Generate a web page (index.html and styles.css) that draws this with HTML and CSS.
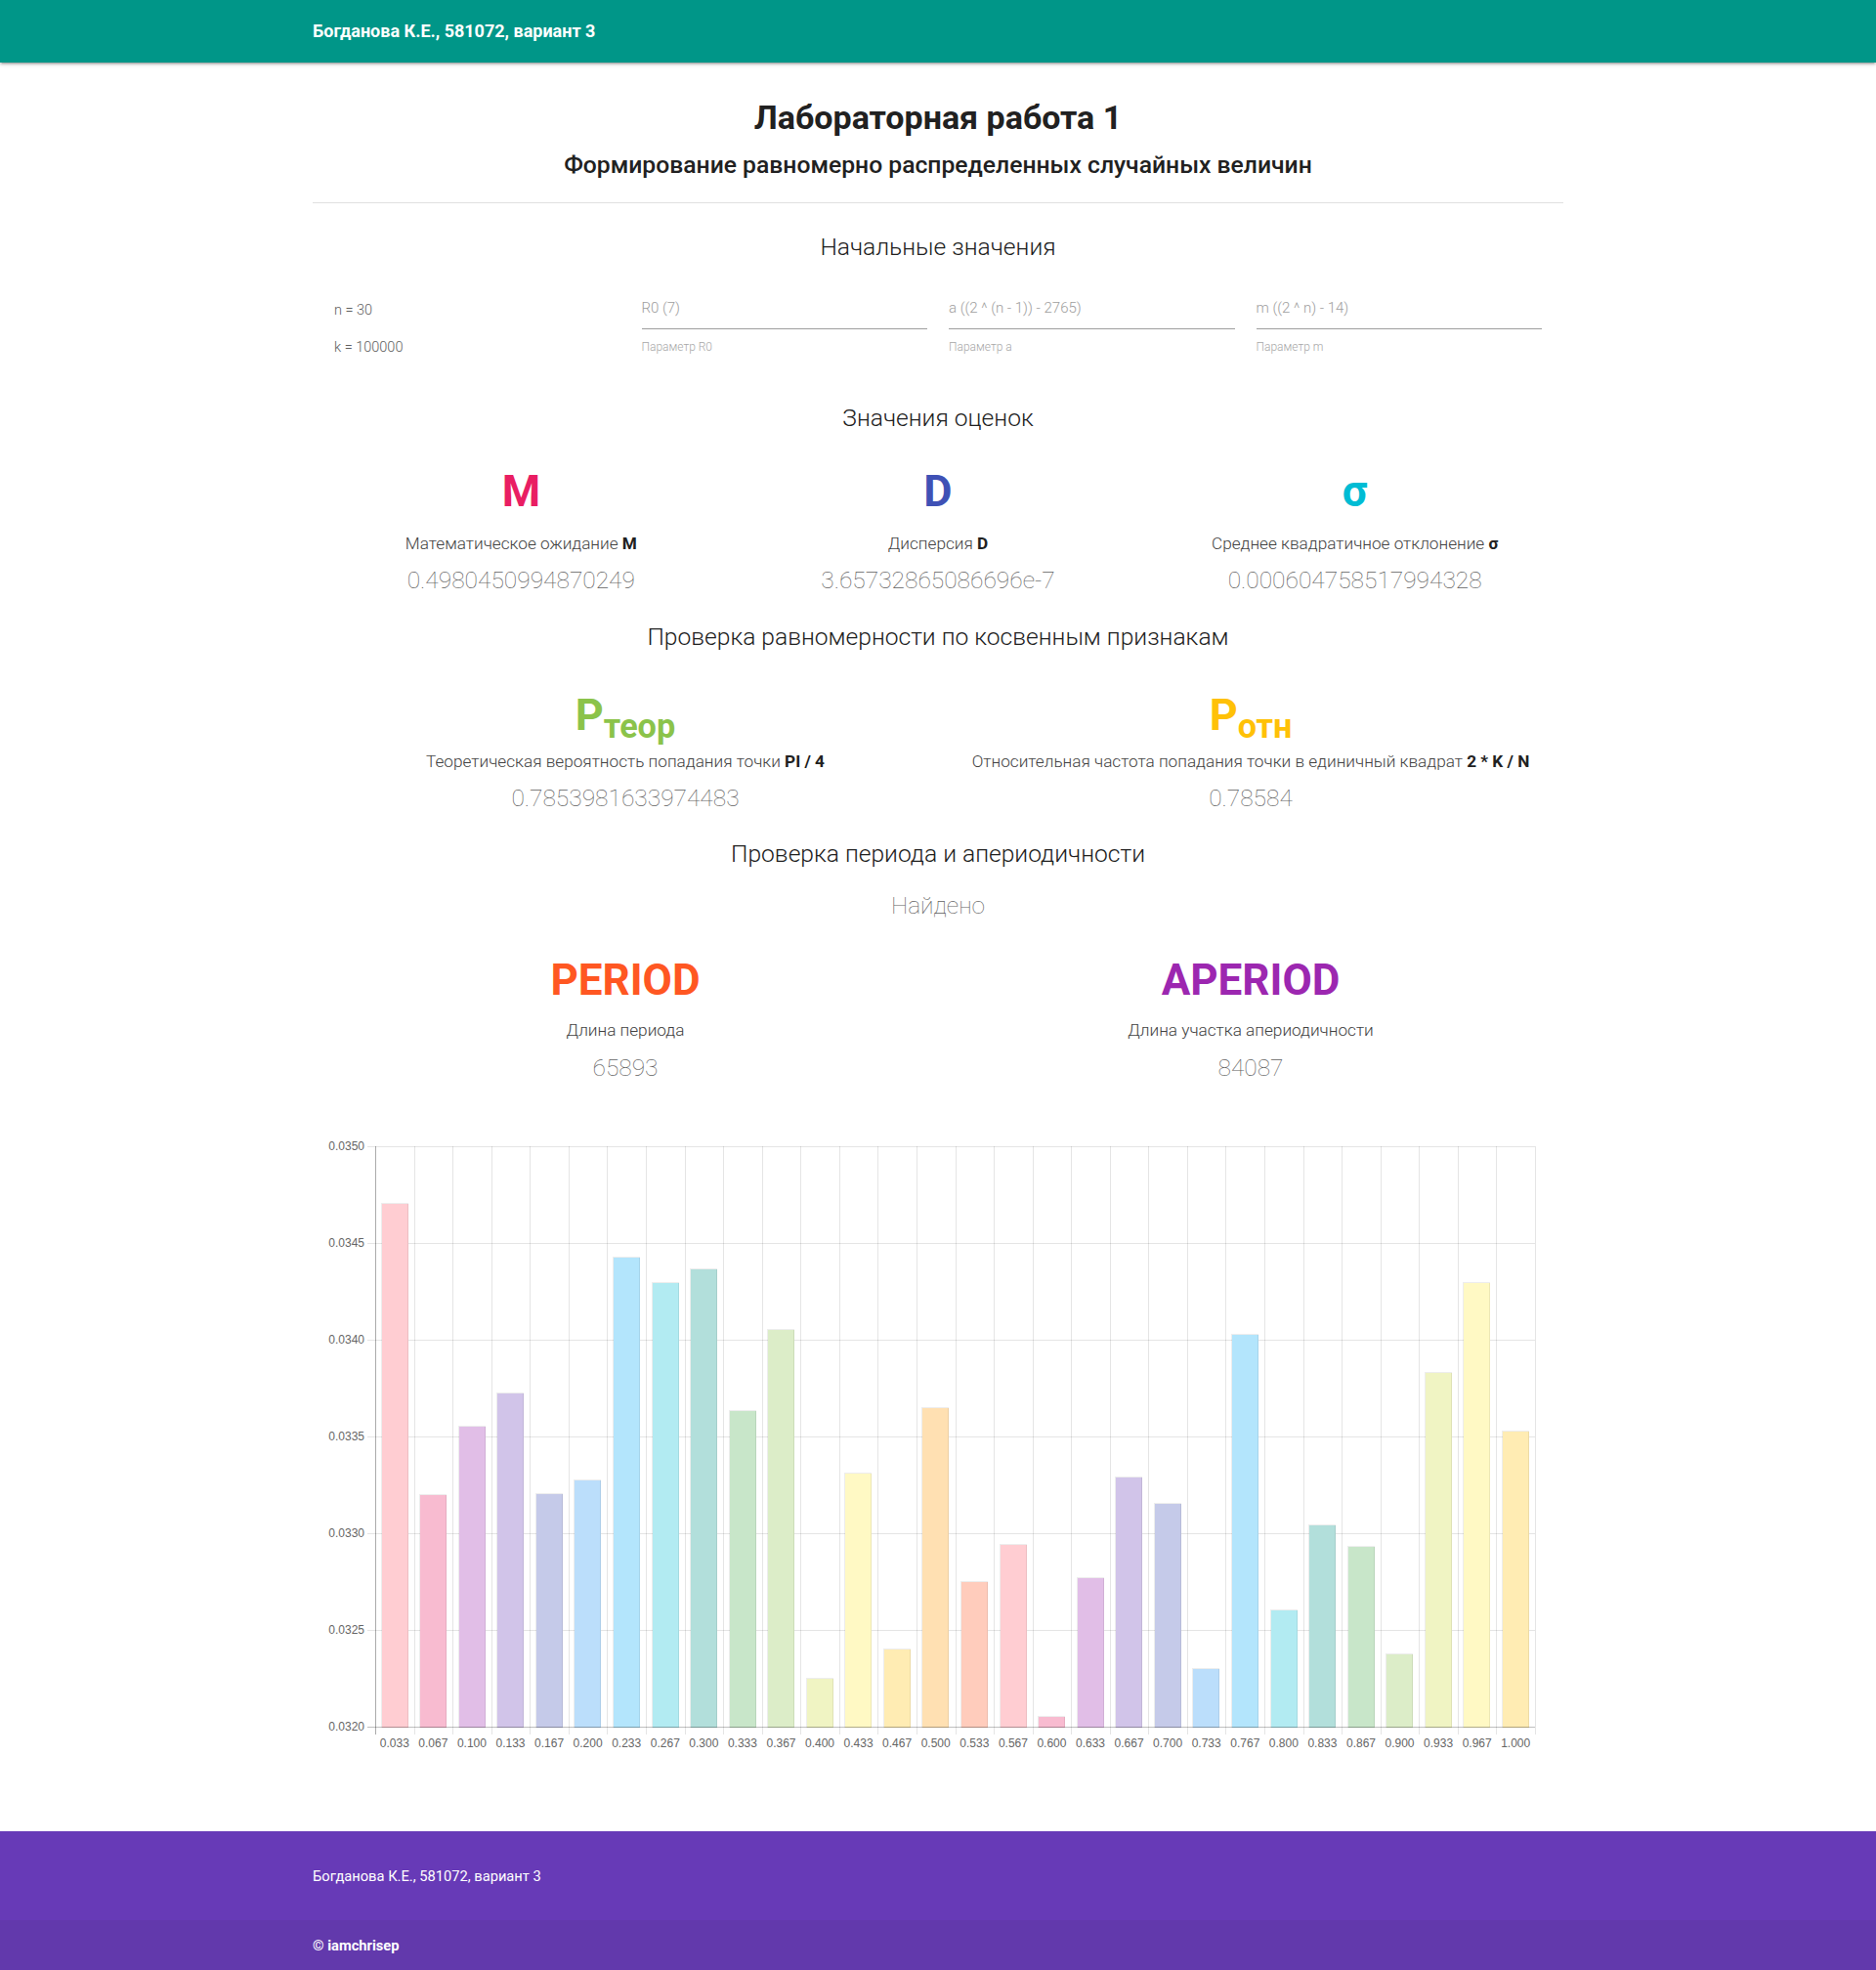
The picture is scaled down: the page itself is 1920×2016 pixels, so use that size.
FILE: index.html
```html
<!DOCTYPE html>
<html lang="ru">
<head>
<meta charset="utf-8">
<title>Лабораторная работа 1</title>
<link rel="stylesheet" href="styles.css">
</head>
<body>
<header class="nav">
  <div class="container nav-inner">Богданова К.Е., 581072, вариант 3</div>
</header>

<main class="container">
  <h1 class="title">Лабораторная работа 1</h1>
  <h2 class="subtitle">Формирование равномерно распределенных случайных величин</h2>
  <div class="divider"></div>

  <h3 class="section section-first">Начальные значения</h3>
  <div class="inputs">
    <div class="consts">
      <div class="const">n = 30</div>
      <div class="const">k = 100000</div>
    </div>
    <div class="field">
      <div class="field-input">R0 (7)</div>
      <div class="field-help">Параметр R0</div>
    </div>
    <div class="field">
      <div class="field-input">a ((2 ^ (n - 1)) - 2765)</div>
      <div class="field-help">Параметр a</div>
    </div>
    <div class="field">
      <div class="field-input">m ((2 ^ n) - 14)</div>
      <div class="field-help">Параметр m</div>
    </div>
  </div>

  <h3 class="section section-est">Значения оценок</h3>
  <div class="stats stats-3">
    <div class="stat">
      <div class="big pink">M</div>
      <div class="label">Математическое ожидание <b>M</b></div>
      <div class="value">0.4980450994870249</div>
    </div>
    <div class="stat">
      <div class="big indigo">D</div>
      <div class="label">Дисперсия <b>D</b></div>
      <div class="value">3.65732865086696e-7</div>
    </div>
    <div class="stat">
      <div class="big cyan">σ</div>
      <div class="label">Среднее квадратичное отклонение <b>σ</b></div>
      <div class="value">0.000604758517994328</div>
    </div>
  </div>

  <h3 class="section section-uni">Проверка равномерности по косвенным признакам</h3>
  <div class="stats stats-2 stats-p">
    <div class="stat">
      <div class="big lgreen">P<span class="sub">теор</span></div>
      <div class="label label-p">Теоретическая вероятность попадания точки <b>PI / 4</b></div>
      <div class="value value-p">0.7853981633974483</div>
    </div>
    <div class="stat">
      <div class="big amber">P<span class="sub">отн</span></div>
      <div class="label label-p">Относительная частота попадания точки в единичный квадрат <b>2 * K / N</b></div>
      <div class="value value-p">0.78584</div>
    </div>
  </div>

  <h3 class="section section-per">Проверка периода и апериодичности</h3>
  <div class="found">Найдено</div>
  <div class="stats stats-2 stats-per">
    <div class="stat">
      <div class="big big-word dorange">PERIOD</div>
      <div class="label label-per">Длина периода</div>
      <div class="value value-per">65893</div>
    </div>
    <div class="stat">
      <div class="big big-word purple">APERIOD</div>
      <div class="label label-per">Длина участка апериодичности</div>
      <div class="value value-per">84087</div>
    </div>
  </div>

  <div class="chart">
    <svg width="1280" height="650" viewBox="0 0 1280 650" xmlns="http://www.w3.org/2000/svg">
      <g class="grid" stroke="rgba(0,0,0,0.1)" stroke-width="1" shape-rendering="crispEdges">
        <line x1="56" y1="23.5" x2="1251" y2="23.5"/>
        <line x1="56" y1="122.5" x2="1251" y2="122.5"/>
        <line x1="56" y1="221.5" x2="1251" y2="221.5"/>
        <line x1="56" y1="320.5" x2="1251" y2="320.5"/>
        <line x1="56" y1="419.5" x2="1251" y2="419.5"/>
        <line x1="56" y1="518.5" x2="1251" y2="518.5"/>
      </g>
      <g id="vgrid" stroke="rgba(0,0,0,0.1)" stroke-width="1" shape-rendering="crispEdges"></g>
      <g id="bars" shape-rendering="crispEdges"></g>
      <g stroke="rgba(0,0,0,0.25)" stroke-width="1" shape-rendering="crispEdges">
        <line x1="56" y1="617.5" x2="1251" y2="617.5"/>
        <line x1="64.5" y1="23" x2="64.5" y2="625"/>
      </g>
      <g class="ylabels" font-family="Liberation Sans, Arial, sans-serif" font-size="12" fill="#666" text-anchor="end">
        <text x="53" y="27">0.0350</text>
        <text x="53" y="126">0.0345</text>
        <text x="53" y="225">0.0340</text>
        <text x="53" y="324">0.0335</text>
        <text x="53" y="423">0.0330</text>
        <text x="53" y="522">0.0325</text>
        <text x="53" y="621">0.0320</text>
      </g>
      <g id="xlabels" font-family="Liberation Sans, Arial, sans-serif" font-size="12" fill="#666" text-anchor="middle"></g>
    </svg>
  </div>
</main>

<footer class="footer">
  <div class="container footer-text">Богданова К.Е., 581072, вариант 3</div>
  <div class="footer-copy">
    <div class="container"><b>© iamchrisep</b></div>
  </div>
</footer>

<script src="chart.js"></script>
</body>
</html>
```

FILE: chart.js
```js
(function () {
  var values = [0.034708, 0.033201, 0.033558, 0.033727, 0.033208, 0.033279, 0.034429, 0.034299, 0.034370, 0.033636,
                0.034058, 0.032253, 0.033312, 0.032403, 0.033649, 0.032753, 0.032942, 0.032058, 0.032773, 0.033292,
                0.033156, 0.032305, 0.034032, 0.032604, 0.033045, 0.032935, 0.032377, 0.033831, 0.034299, 0.033532];
  var colors = ['#ffcdd2', '#f8bbd0', '#e1bee7', '#d1c4e9', '#c5cae9', '#bbdefb', '#b3e5fc', '#b2ebf2',
                '#b2dfdb', '#c8e6c9', '#dcedc8', '#f0f4c3', '#fff9c4', '#ffecb3', '#ffe0b2', '#ffccbc'];
  var NS = 'http://www.w3.org/2000/svg';
  var x0 = 64, x1 = 1251, yTop = 23, yBot = 617;
  var n = values.length, cw = (x1 - x0) / n, bw = cw * 0.72;
  var vg = document.getElementById('vgrid');
  var bars = document.getElementById('bars');
  var xl = document.getElementById('xlabels');
  for (var i = 0; i <= n; i++) {
    var gx = Math.round(x0 + i * cw) + 0.5;
    var l = document.createElementNS(NS, 'line');
    l.setAttribute('x1', gx); l.setAttribute('x2', gx);
    l.setAttribute('y1', yTop); l.setAttribute('y2', 625);
    vg.appendChild(l);
  }
  for (var j = 0; j < n; j++) {
    var h = (values[j] - 0.032) / 0.003 * (yBot - yTop);
    var r = document.createElementNS(NS, 'rect');
    var bx = x0 + j * cw + (cw - bw) / 2;
    r.setAttribute('x', Math.round(bx) + 0.5);
    r.setAttribute('y', Math.round(yBot - h) + 0.5);
    r.setAttribute('width', Math.round(bw) - 1);
    r.setAttribute('height', Math.round(h));
    r.setAttribute('fill', colors[j % colors.length]);
    r.setAttribute('stroke', 'rgba(0,0,0,0.07)');
    bars.appendChild(r);
    var t = document.createElementNS(NS, 'text');
    t.setAttribute('x', (x0 + j * cw + cw / 2).toFixed(1));
    t.setAttribute('y', 638);
    t.textContent = ((j + 1) / 30).toFixed(3);
    xl.appendChild(t);
  }
})();
```

FILE: styles.css
```css
* { box-sizing: border-box; }

html, body {
  margin: 0;
  padding: 0;
}

body {
  font-family: Roboto, "Noto Sans", sans-serif;
  color: #212121;
  background: #fff;
}

.container {
  width: 1280px;
  margin: 0 auto;
}

/* header */
.nav {
  height: 64px;
  background: #009688;
  color: #fff;
  box-shadow: 0 2px 2px 0 rgba(0,0,0,0.14), 0 3px 1px -2px rgba(0,0,0,0.12), 0 1px 5px 0 rgba(0,0,0,0.2);
}
.nav-inner {
  font-size: 18px;
  font-weight: 700;
  line-height: 63px;
}

/* titles */
.title {
  margin: 36px 0 0;
  font-size: 34px;
  line-height: 40px;
  font-weight: 700;
  text-align: center;
}
.subtitle {
  margin: 14px 0 0;
  font-size: 24.7px;
  line-height: 30px;
  font-weight: 500;
  text-align: center;
}
.divider {
  margin-top: 23px;
  height: 1px;
  background: #e0e0e0;
}

.section {
  margin: 0;
  font-size: 24.6px;
  line-height: 32px;
  font-weight: 300;
  text-align: center;
  color: #212121;
}
.section-first { margin-top: 29px; }
.section-est { margin-top: 46px; }
.section-uni { margin-top: 26px; }
.section-per { margin-top: 25px; }

/* inputs */
.inputs {
  margin-top: 36px;
  padding: 0 22px;
  display: grid;
  grid-template-columns: repeat(4, 1fr);
  column-gap: 22px;
}
.consts {
  padding-top: 3px;
  display: flex;
  flex-direction: column;
  gap: 18px;
}
.const {
  font-size: 14.5px;
  line-height: 20px;
  font-weight: 300;
  color: #616161;
}
.field-input {
  font-size: 15px;
  line-height: 20px;
  font-weight: 300;
  color: #9e9e9e;
  padding-bottom: 11px;
  border-bottom: 1px solid #9e9e9e;
}
.field-help {
  margin-top: 11px;
  font-size: 12px;
  line-height: 14px;
  font-weight: 300;
  color: #a8a8a8;
}

/* stats */
.stats {
  display: grid;
  text-align: center;
}
.stats-3 {
  grid-template-columns: repeat(3, 1fr);
  margin-top: 32px;
}
.stats-2 { grid-template-columns: repeat(2, 1fr); }
.stats-p { margin-top: 37px; }
.stats-per { margin-top: 33px; }

.big {
  font-size: 45px;
  line-height: 54px;
  font-weight: 700;
}
.big-word { font-size: 44px; }
.sub {
  font-size: 0.76em;
  position: relative;
  top: 8px;
  line-height: 0;
}
.label {
  margin-top: 15px;
  font-size: 17.2px;
  line-height: 22px;
  font-weight: 300;
  color: #424242;
}
.label b {
  font-weight: 700;
  color: #212121;
}
.value {
  margin-top: 11px;
  font-size: 24.5px;
  line-height: 32px;
  font-weight: 100;
  color: #616161;
}
.label-p { margin-top: 9px; }
.label-per { margin-top: 13px; }
.value-per { margin-top: 12px; }

.found {
  margin-top: 21px;
  font-size: 24.5px;
  line-height: 32px;
  font-weight: 100;
  color: #616161;
  text-align: center;
}

.pink { color: #e91e63; }
.indigo { color: #3f51b5; }
.cyan { color: #00bcd4; }
.lgreen { color: #8bc34a; }
.amber { color: #ffc107; }
.dorange { color: #ff5722; }
.purple { color: #9c27b0; }

/* chart */
.chart {
  margin-top: 41px;
  height: 650px;
}
.chart svg { display: block; }

/* footer */
.footer {
  margin-top: 74px;
  background: #673ab7;
  color: #fff;
}
.footer-text {
  padding: 36px 0 35px;
  font-size: 14.7px;
  line-height: 20px;
}
.footer-copy {
  background: rgba(51,51,51,0.08);
  height: 51px;
  display: flex;
  align-items: center;
  font-size: 14.7px;
  color: rgba(255,255,255,0.9);
}
.footer-copy b { font-weight: 700; color: #fff; }
```
